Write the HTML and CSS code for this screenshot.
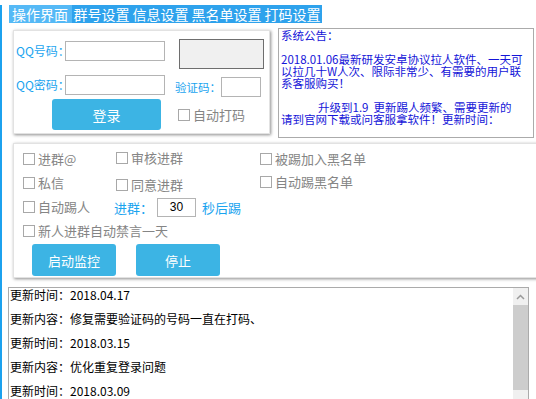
FILE: index.html
```html
<!DOCTYPE html>
<html>
<head>
<meta charset="UTF-8">
<title>操作界面</title>
<link rel="stylesheet" href="styles.css">
</head>
<body>
	<div class="app">
		<div class="tabs">
			<span class="tab active">操作界面</span>
			<span class="tab">群号设置</span>
			<span class="tab">信息设置</span>
			<span class="tab">黑名单设置</span>
			<span class="tab">打码设置</span>
		</div>
		<div class="top">
			<div class="login panel">
				<div class="row">
					<span class="lbl">QQ号码：</span>
					<input class="field" type="text">
					<div class="captcha"></div>
				</div>
				<div class="row row2">
					<span class="lbl">QQ密码：</span>
					<input class="field" type="password">
					<span class="lbl code-lbl">验证码：</span>
					<input class="field code" type="text">
				</div>
				<div class="row row3">
					<button class="btn login-btn">登录</button>
					<label class="chk auto"><span class="box"></span>自动打码</label>
				</div>
			</div>
			<div class="notice">
				<p>系统公告：</p>
				<p>&nbsp;</p>
				<p>2018.01.06最新研发安卓协议拉人软件、一天可<br>以拉几十W人次、限际非常少、有需要的用户联<br>系客服购买！</p>
				<p>&nbsp;</p>
				<p class="indent">升级到1.9&nbsp;&nbsp;更新踢人频繁、需要更新的<br>请到官网下载或问客服拿软件！更新时间：</p>
			</div>
		</div>
		<div class="settings panel">
			<div class="opts">
				<label class="chk"><span class="box"></span>进群@</label>
				<label class="chk up"><span class="box"></span>审核进群</label>
				<label class="chk"><span class="box"></span>被踢加入黑名单</label>
				<label class="chk"><span class="box"></span>私信</label>
				<label class="chk down"><span class="box"></span>同意进群</label>
				<label class="chk up"><span class="box"></span>自动踢黑名单</label>
				<label class="chk"><span class="box"></span>自动踢人</label>
				<div class="kick">
					<span class="blue">进群：</span>
					<input class="field secs" type="text" value="30">
					<span class="blue after">秒后踢</span>
				</div>
				<label class="chk wide"><span class="box"></span>新人进群自动禁言一天</label>
			</div>
			<div class="actions">
				<button class="btn">启动监控</button>
				<button class="btn">停止</button>
			</div>
		</div>
		<div class="log">
			<div class="log-text">
				<p>更新时间：2018.04.17</p>
				<p>更新内容：修复需要验证码的号码一直在打码、</p>
				<p>更新时间：2018.03.15</p>
				<p>更新内容：优化重复登录问题</p>
				<p>更新时间：2018.03.09</p>
			</div>
			<div class="scrollbar">
				<div class="arrow">
					<svg width="9" height="6" viewBox="0 0 9 6"><path d="M1 5 L4.5 1.5 L8 5" fill="none" stroke="#9a9a9a" stroke-width="1.5"/></svg>
				</div>
				<div class="thumb"></div>
			</div>
		</div>
	</div>
</body>
</html>
```
FILE: styles.css
```css
body {
	margin: 0;
	background: #fff;
	font-family: "Noto Sans CJK SC", sans-serif;
	overflow: hidden;
}

p {
	margin: 0;
}

.app {
	height: 399px;
	box-sizing: border-box;
	border-left: 2px solid #1ca1ee;
	padding-left: 6px;
}

.tabs {
	display: flex;
	width: max-content;
	margin: 5px 0 0 1px;
	background: #2ea2ec;
	color: #fff;
	font-size: 14px;
	line-height: 18px;
}

.tab {
	padding: 0 1.5px;
}

.tab.active {
	background: #55b9f6;
	padding: 0 4px 0 3px;
}

.top {
	display: flex;
	align-items: flex-start;
}

.panel {
	box-sizing: border-box;
	border: 1px solid #e2e2e2;
	box-shadow: 1px 1px 3px rgba(0, 0, 0, 0.45);
	background: #fff;
}

.login {
	width: 257px;
	height: 104px;
	margin: 7px 0 0 5px;
	padding: 8px 0 0 2px;
}

.row {
	display: flex;
	align-items: flex-start;
}

.row2 {
	margin-top: 6px;
}

.row3 {
	margin-top: 2px;
}

.lbl {
	flex-shrink: 0;
	width: 49px;
	color: #1aa4ef;
	font-size: 12px;
	line-height: 20px;
	white-space: nowrap;
}

.row:first-child .lbl,
.row:first-child .field {
	margin-top: 2px;
}

.field {
	flex-shrink: 0;
	box-sizing: border-box;
	width: 100px;
	height: 20px;
	margin: 0;
	padding: 0;
	border: 1px solid #b4b4b4;
	background: #fff;
	outline: none;
}

.captcha {
	flex-shrink: 0;
	width: 85px;
	height: 30px;
	box-sizing: border-box;
	margin-left: 14px;
	border: 1px solid #6e6e6e;
	background: #f0f0f0;
}

.code-lbl {
	width: 46px;
	margin: 2px 0 0 10px;
	font-size: 11.5px;
}

.field.code {
	width: 40px;
	margin-top: 2px;
}

.btn {
	flex-shrink: 0;
	border: none;
	border-radius: 3px;
	background: #3cb4e4;
	color: #fff;
	font-family: "Noto Sans CJK SC", sans-serif;
	font-size: 13px;
	padding: 0;
}

.login-btn {
	width: 109px;
	height: 31px;
	margin-left: 36px;
	font-size: 14px;
}

.chk {
	display: flex;
	align-items: center;
	color: #858585;
	font-size: 13px;
	line-height: 16px;
	white-space: nowrap;
}

.box {
	flex-shrink: 0;
	width: 12px;
	height: 12px;
	box-sizing: border-box;
	border: 1px solid #a8a8a8;
	background: #fff;
	margin-right: 3px;
}

.auto {
	margin: 8px 0 0 17px;
}

.notice {
	box-sizing: border-box;
	width: 256px;
	height: 110px;
	margin: 5px 0 0 8px;
	padding: 0 0 0 2px;
	border: 1px solid #ababab;
	color: #1414d8;
	font-size: 11.5px;
	line-height: 12px;
	white-space: nowrap;
	overflow: hidden;
}

.notice .indent {
	text-indent: 37px;
}

.settings {
	height: 135px;
	margin: 5px -20px 0 5px;
	padding: 3px 0 0 9px;
}

.opts {
	display: grid;
	grid-template-columns: 93px 144px auto;
	grid-auto-rows: 24px;
	align-items: center;
}

.chk.up {
	margin-top: -3px;
}

.chk.down {
	margin-top: 3px;
}

.kick {
	grid-column: 2 / 4;
	display: flex;
	align-items: center;
	margin-left: -2px;
}

.blue {
	color: #1aa4ef;
	font-size: 13px;
}

.field.secs {
	width: 39px;
	height: 19px;
	margin-left: 4px;
	text-align: center;
	font-family: "Liberation Sans", sans-serif;
	font-size: 12px;
	color: #000;
}

.after {
	margin-left: 6px;
}

.wide {
	grid-column: 1 / 4;
}

.actions {
	display: flex;
	gap: 20px;
	margin: 1px 0 0 9px;
}

.actions .btn {
	width: 84px;
	height: 32px;
}

.log {
	display: flex;
	box-sizing: border-box;
	width: 521px;
	height: 120px;
	margin-top: 9px;
	border: 1px solid #ababab;
	border-bottom: none;
}

.log-text {
	flex: 1;
	padding-left: 1px;
	font-size: 12px;
	line-height: 14px;
	color: #000;
}

.log-text p {
	margin-bottom: 10px;
}

.scrollbar {
	width: 15px;
	background: #f0f0f0;
}

.arrow {
	height: 17px;
	display: flex;
	align-items: center;
	justify-content: center;
}

.thumb {
	height: 85px;
	background: #cdcdcd;
}
```
